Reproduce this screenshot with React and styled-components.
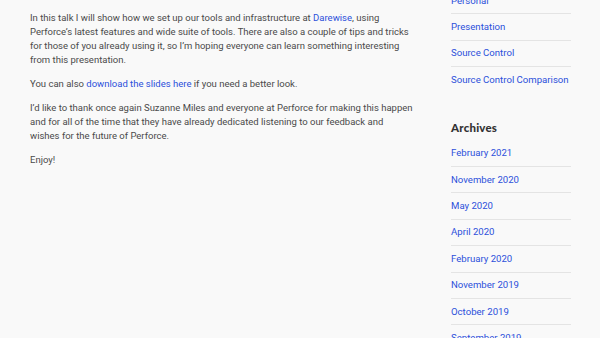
import React from "react";
import styled, { createGlobalStyle } from "styled-components";

const Global = createGlobalStyle`
  html, body {
    margin: 0;
    padding: 0;
    background: #f9f9f9;
    overflow: hidden;
  }
`;

const Page = styled.div`
  display: grid;
  grid-template-columns: 385.5px 120px;
  column-gap: 35.5px;
  padding-left: 30px;
  height: 338px;
  overflow: hidden;
  font-family: Roboto, "Liberation Sans", sans-serif;
`;

const Article = styled.div`
  padding-top: 11px;
  color: #4a4a4a;
  font-size: 9.5px;
  line-height: 14px;

  p {
    margin: 0 0 10px;
  }

  a {
    color: #2c50db;
    text-decoration: none;
  }
`;

const Sidebar = styled.aside`
  margin-top: -12px;
`;

const Widget = styled.section`
  margin-bottom: ${(p) => p.gap || 0}px;
`;

const WidgetTitle = styled.h3`
  margin: 0;
  padding: 0 0 5px;
  font-family: Lato, "Liberation Sans", sans-serif;
  font-weight: 900;
  font-size: 11.5px;
  line-height: 16px;
  color: #333;
  letter-spacing: 0.2px;
`;

const List = styled.ul`
  list-style: none;
  margin: 0;
  padding: 0;
`;

const Item = styled.li`
  padding: 6.5px 0;
  line-height: 12.4px;
  font-size: 9.6px;
  white-space: nowrap;
  border-bottom: 1px solid ${(p) => (p.last ? "transparent" : "#e4e4e4")};

  a {
    color: #2c50db;
    text-decoration: none;
  }
`;

const categories = ["Personal", "Presentation", "Source Control", "Source Control Comparison"];
const archives = [
  "February 2021",
  "November 2020",
  "May 2020",
  "April 2020",
  "February 2020",
  "November 2019",
  "October 2019",
  "September 2019",
];

export default function App() {
  return (
    <>
      <Global />
      <Page>
        <Article>
          <p>
            In this talk I will show how we set up our tools and infrastructure at{" "}
            <a href="#">Darewise</a>, using Perforce’s latest features and wide suite of tools.
            There are also a couple of tips and tricks for those of you already using it, so I’m
            hoping everyone can learn something interesting from this presentation.
          </p>
          <p>
            You can also <a href="#">download the slides here</a> if you need a better look.
          </p>
          <p>
            I’d like to thank once again Suzanne Miles and everyone at Perforce for making this
            happen and for all of the time that they have already dedicated listening to our
            feedback and
            <br />
            wishes for the future of Perforce.
          </p>
          <p>Enjoy!</p>
        </Article>
        <Sidebar>
          <Widget gap={26}>
            <List>
              {categories.map((c, i) => (
                <Item key={c} last={i === categories.length - 1}>
                  <a href="#">{c}</a>
                </Item>
              ))}
            </List>
          </Widget>
          <Widget>
            <WidgetTitle>Archives</WidgetTitle>
            <List>
              {archives.map((a) => (
                <Item key={a}>
                  <a href="#">{a}</a>
                </Item>
              ))}
            </List>
          </Widget>
        </Sidebar>
      </Page>
    </>
  );
}
